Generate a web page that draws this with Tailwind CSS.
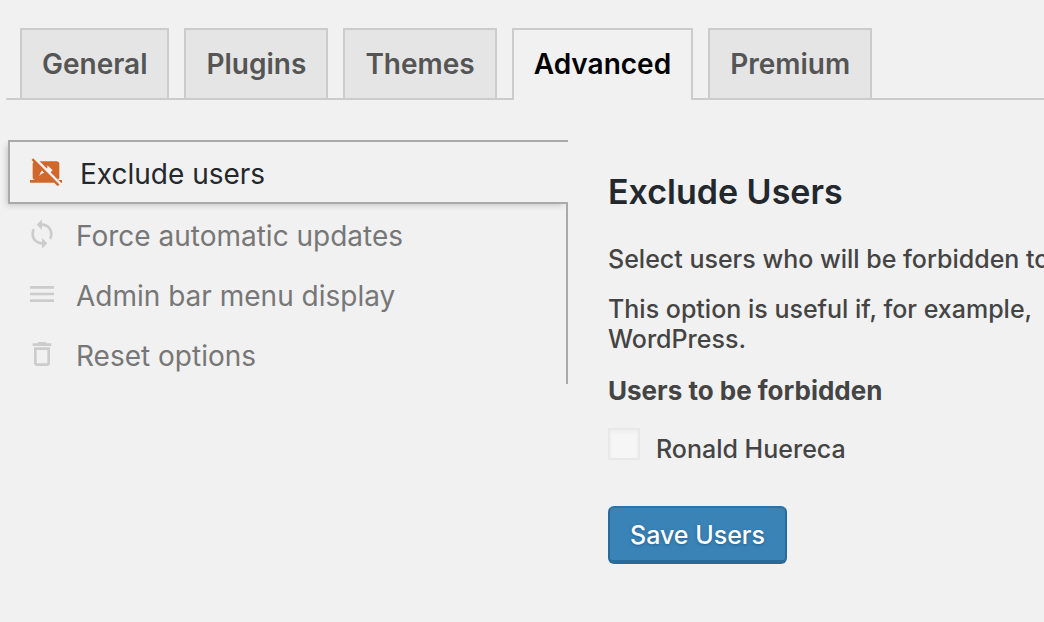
<!DOCTYPE html>
<html lang="en">
<head>
<meta charset="utf-8">
<meta name="viewport" content="width=device-width, initial-scale=1">
<title>Advanced options</title>
<script src="https://cdn.jsdelivr.net/npm/@tailwindcss/browser@4"></script>
</head>
<body class="min-h-screen overflow-x-hidden bg-[#f1f1f1] font-['Inter','Roboto',sans-serif] text-[#444]">
<nav class="ml-1.5 flex gap-[15px] border-b-2 border-[#ccc] pt-7 pl-3.5 text-[28px]/9 font-semibold text-[#555]" aria-label="Settings sections">
  <a href="#general" class="border-2 border-b-0 border-[#ccc] bg-[#e5e5e5] px-5 py-4">General</a>
  <a href="#plugins" class="border-2 border-b-0 border-[#ccc] bg-[#e5e5e5] px-5 py-4">Plugins</a>
  <a href="#themes" class="border-2 border-b-0 border-[#ccc] bg-[#e5e5e5] px-5 py-4">Themes</a>
  <a href="#advanced" aria-current="page" class="-mb-0.5 border-2 border-b-0 border-[#ccc] bg-[#f1f1f1] px-5 pt-4 pb-[18px] text-black">Advanced</a>
  <a href="#premium" class="border-2 border-b-0 border-[#ccc] bg-[#e5e5e5] px-5 py-4">Premium</a>
</nav>
<div class="flex items-start gap-10 pt-10 pl-2">
  <aside class="w-[560px] shrink-0 text-[28px]/[56px] text-[#777]">
    <a href="#exclude" class="flex h-16 items-center gap-[18px] border-2 border-r-0 border-[#aaa] pl-5 text-[#23282d] shadow-[-3px_3px_6px_-2px_rgba(0,0,0,0.2)]">
      <svg class="size-8 shrink-0 fill-[#d0682c]" viewBox="0 0 24 24" aria-hidden="true"><path d="M21.22 18.02l2 2H24v-2h-2.78zm.77-2l.01-10c0-1.11-.9-2-2-2H7.22l5.23 5.23c.18-.04.36-.07.55-.1V7.02l4 3.73-1.58 1.47 5.54 5.54c.61-.33 1.03-.99 1.03-1.74zM2.39 1.73L1.11 3l1.54 1.54c-.4.36-.65.89-.65 1.48v10c0 1.1.89 2 2 2H0v2h18.13l2.71 2.71 1.27-1.27L2.39 1.73zM7 15.02c.31-1.48.92-2.95 2.07-4.06l1.59 1.59c-1.54.38-2.7 1.18-3.66 2.47z"/></svg>
      <span class="pt-1">Exclude users</span>
    </a>
    <div class="border-r-2 border-[#aaa]">
      <a href="#force" class="flex h-15 items-center gap-[18px] pl-[18px]">
        <svg class="size-8 shrink-0 fill-[#ccc]" viewBox="0 0 24 24" aria-hidden="true"><path d="M12 4V1L8 5l4 4V6c3.31 0 6 2.69 6 6 0 1.01-.25 1.97-.7 2.8l1.46 1.46C19.54 15.03 20 13.57 20 12c0-4.42-3.58-8-8-8zm0 14c-3.31 0-6-2.69-6-6 0-1.01.25-1.97.7-2.8L5.24 7.74C4.46 8.97 4 10.43 4 12c0 4.42 3.58 8 8 8v3l4-4-4-4v3z"/></svg>
        <span class="pt-1">Force automatic updates</span>
      </a>
      <a href="#adminbar" class="flex h-15 items-center gap-[18px] pl-[18px]">
        <svg class="size-8 shrink-0 fill-[#ccc]" viewBox="0 0 24 24" aria-hidden="true"><path d="M3 18h18v-2H3v2zm0-5h18v-2H3v2zm0-7v2h18V6H3z"/></svg>
        <span class="pt-1">Admin bar menu display</span>
      </a>
      <a href="#reset" class="flex h-15 items-center gap-[18px] pl-[18px]">
        <svg class="size-8 shrink-0 fill-[#ccc]" viewBox="0 0 24 24" aria-hidden="true"><path d="M6 19c0 1.1.9 2 2 2h8c1.1 0 2-.9 2-2V7H6v12zM8 9h8v10H8V9zm7.500-5l-1-1h-5l-1 1H5v2h14V4h-3.500z"/></svg>
        <span class="pt-1">Reset options</span>
      </a>
    </div>
  </aside>
  <main class="min-w-0 flex-1 overflow-hidden pt-[34px] text-[25px]/[30px] font-[450]">
    <h1 class="text-[34px]/9 font-semibold text-[#23282d]">Exclude Users</h1>
    <p class="mt-[34px] whitespace-nowrap">Select users who will be forbidden to</p>
    <p class="mt-5 whitespace-nowrap">This option is useful if, for example,<br>WordPress.</p>
    <h2 class="mt-[22px] text-[26px]/[30px] font-bold">Users to be forbidden</h2>
    <div class="mt-[22px] flex items-start gap-4">
      <input id="ronald" type="checkbox" class="size-8 appearance-none border-2 border-[#e8e8e8] bg-[#f6f6f6] shadow-[inset_0_2px_4px_rgba(0,0,0,0.04)]">
      <label for="ronald" class="pt-[6px]">Ronald Huereca</label>
    </div>
    <button type="submit" class="mt-[42px] h-[58px] rounded-md border-2 border-b-4 border-[#2a6a9a] border-t-[#2b73a8] bg-[#3a83b6] px-5 pt-0.5 font-medium text-white text-shadow-[0_1px_3px_#1f5f8f]">Save Users</button>
  </main>
</div>
</body>
</html>
